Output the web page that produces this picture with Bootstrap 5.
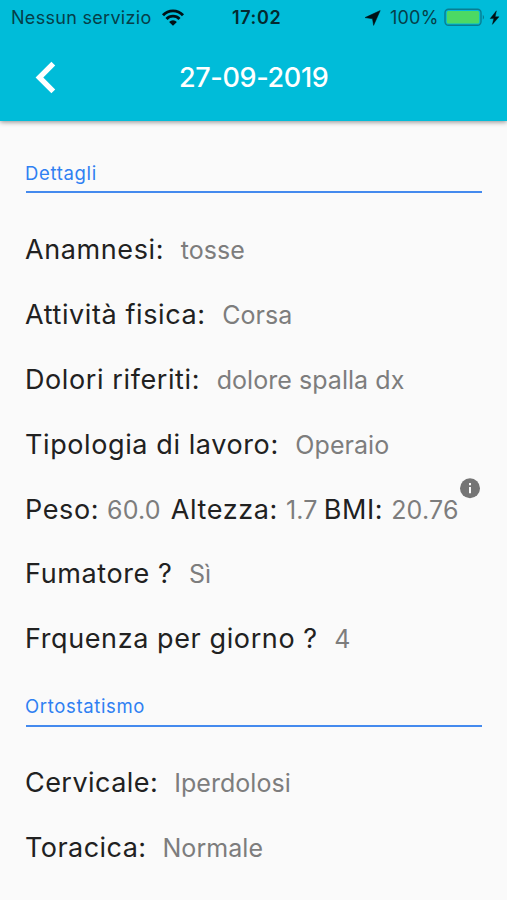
<!DOCTYPE html>
<html lang="it">
<head>
<meta charset="utf-8">
<meta name="viewport" content="width=device-width, initial-scale=1">
<title>27-09-2019</title>
<link rel="stylesheet" href="https://cdn.jsdelivr.net/npm/bootstrap@5.3.0/dist/css/bootstrap.min.css">
<style>
body{font-family:Inter,"Liberation Sans",sans-serif;background:#fafafa;height:900px}
.topbar{background:#00bcd9;height:121px;box-shadow:0 1px 5px rgba(0,0,0,.45)}
.statusbar{height:35px;padding:0 7px 0 11px;display:grid;grid-template-columns:221px 132px auto;font-size:18px;line-height:35px;color:#063f49}
.carrier{letter-spacing:.3px}
.wifi{margin-left:9px}
.clock{font-weight:600;color:#042a30;letter-spacing:.6px}
.pct{letter-spacing:.2px}
.batt{margin-left:5px}
.bolt{margin-left:3px}
.titlebar{height:86px;padding-left:35px}
.titletext{font-size:27px;font-weight:550;line-height:86px;letter-spacing:-.35px;margin-left:123px}
.body-area{padding:0 25px}
.sect{color:#2f80f2;font-size:18.5px;font-weight:400;line-height:24px;height:32px;letter-spacing:.65px;border-bottom:2px solid #448aee;margin-left:1px}
.sect span{margin-left:-1px}
.s1{margin-top:40px}
.s2{margin-top:22.6px;height:33px}
.rows{padding-top:24px}
.line{height:64.9px;line-height:65px;white-space:pre}
.lab{font-size:27px;color:#212121;letter-spacing:.6px}
.rows2{padding-top:23px}
.rows2 .lab{letter-spacing:.45px}
.val{font-size:25px;color:#7d7d7d;letter-spacing:.05px;margin-left:16.6px}
.rows2 .val{margin-left:16px}
.tight .val{margin-left:8px;letter-spacing:.2px}
.alt{margin-left:10px}
.bmi{margin-left:6px}
.info{margin-left:0}
svg{display:block;flex:none}
</style>
</head>
<body class="overflow-hidden">
<header class="topbar">
  <div class="statusbar">
    <div class="d-flex align-items-center"><span class="carrier">Nessun servizio</span>
      <svg class="wifi" width="25" height="18" viewBox="0 0 25 18" fill="none" stroke="#001216" stroke-width="2.9"><path d="M2 6.2a13.8 13.8 0 0 1 20 0M5.5 9.9a9 9 0 0 1 13 0"/><path d="M8.1 12.9a5.6 5.6 0 0 1 7.8 0L12 16.7z" fill="#001216" stroke="none"/></svg></div>
    <div class="clock">17:02</div>
    <div class="d-flex align-items-center">
      <svg width="18" height="18" viewBox="0 0 18 18"><path d="M16.2 1.6 9.6 16.4 8.5 9.8 1 8.6z" fill="#001216" stroke="#001216" stroke-width=".5"/></svg>
      <span class="pct ms-2">100%</span>
      <svg class="batt" width="42" height="20" viewBox="0 0 42 20"><rect x="1" y="1.3" width="36" height="16" rx="3.5" fill="none" stroke="#087d92" stroke-width="1.4"/><rect x="2.8" y="3.1" width="32.4" height="12.4" rx="1.5" fill="#4cd964"/><path d="M38.8 6.8q2.5 2.5 0 5z" fill="#087d92"/></svg>
      <svg class="bolt" width="11" height="18" viewBox="0 0 11 18"><path d="M7.4 1.8 1.2 9.6h3.6L3.4 15.4l6.6-7.6H6.2z" fill="#001216" stroke="#001216" stroke-width=".4"/></svg>
    </div>
  </div>
  <div class="titlebar d-flex align-items-center text-white">
    <svg width="21" height="34" viewBox="0 0 21 34"><path d="M18.3 2.6 4.4 16.5l13.9 13.9" fill="none" stroke="#fff" stroke-width="5.4"/></svg>
    <h1 class="titletext mb-0">27-09-2019</h1>
  </div>
</header>
<main class="body-area">
  <h2 class="sect s1 mb-0"><span>Dettagli</span></h2>
  <div class="rows">
    <div class="line"><span class="lab">Anamnesi:</span><span class="val">tosse</span></div>
    <div class="line"><span class="lab">Attività fisica:</span><span class="val">Corsa</span></div>
    <div class="line"><span class="lab">Dolori riferiti:</span><span class="val">dolore spalla dx</span></div>
    <div class="line"><span class="lab">Tipologia di lavoro:</span><span class="val">Operaio</span></div>
    <div class="line tight d-flex"><div><span class="lab">Peso:</span><span class="val">60.0</span></div><div class="alt"><span class="lab">Altezza:</span><span class="val">1.7</span></div><div class="bmi"><span class="lab">BMI:</span><span class="val">20.76</span></div>
      <svg class="info" width="22" height="22" viewBox="0 0 22 22"><circle cx="11" cy="11.2" r="10" fill="#757575"/><path d="M11 6.1v2.2M11 10v6.2" stroke="#fafafa" stroke-width="2"/></svg></div>
    <div class="line"><span class="lab">Fumatore ?</span><span class="val">Sì</span></div>
    <div class="line"><span class="lab">Frquenza per giorno ?</span><span class="val">4</span></div>
  </div>
  <h2 class="sect s2 mb-0"><span>Ortostatismo</span></h2>
  <div class="rows rows2">
    <div class="line"><span class="lab">Cervicale:</span><span class="val">Iperdolosi</span></div>
    <div class="line"><span class="lab">Toracica:</span><span class="val">Normale</span></div>
  </div>
</main>
<script src="https://cdn.jsdelivr.net/npm/bootstrap@5.3.0/dist/js/bootstrap.bundle.min.js"></script>
</body>
</html>
